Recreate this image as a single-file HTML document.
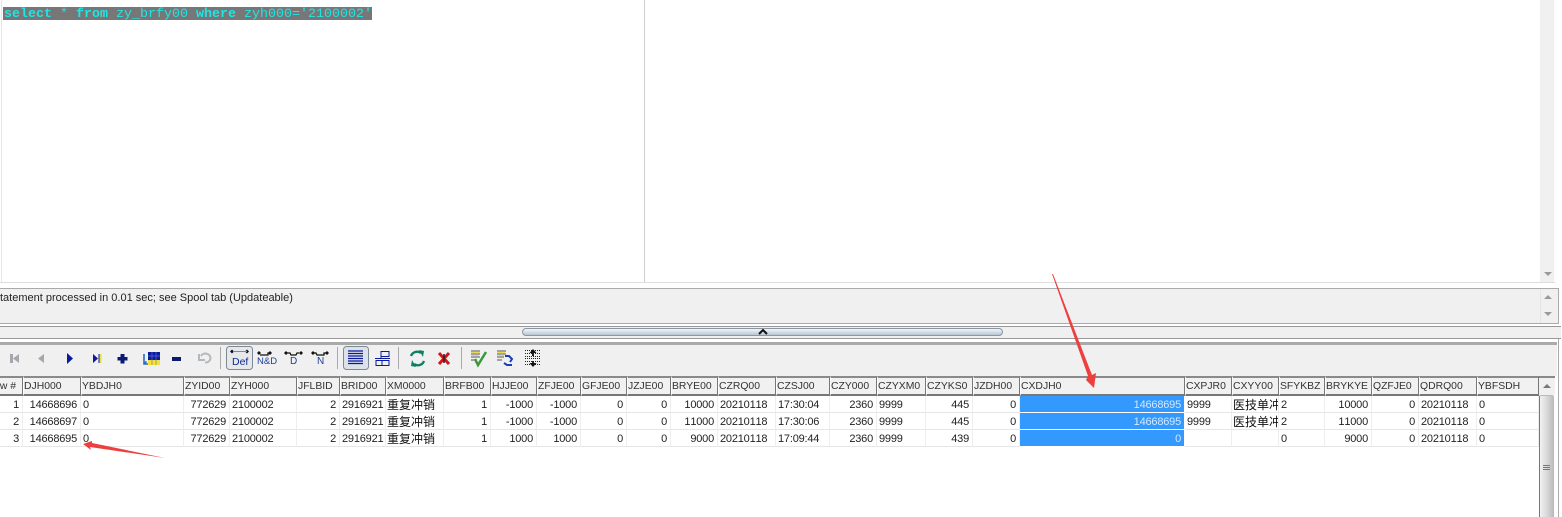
<!DOCTYPE html>
<html><head><meta charset="utf-8"><style>
html,body{margin:0;padding:0;background:#fff}
body{position:relative;width:1562px;height:517px;overflow:hidden;font-family:"Liberation Sans","Noto Sans CJK SC",sans-serif;font-size:11px;color:#222}
.a{position:absolute}
table{position:absolute;left:-19px;top:376px;border-collapse:separate;border-spacing:0;table-layout:fixed;width:1558px;background:#fff}
th,td{box-sizing:border-box;overflow:hidden;white-space:nowrap;font-weight:normal;text-align:left}
th{height:20px;background:#f1f1f1;border-top:2px solid #8a8a8a;border-bottom:2px solid #777;border-left:1px solid #fff;border-right:1px solid #777;font-size:10.4px;padding:1px 0 0 0;color:#333}
th:first-child{padding-right:6px}
td{height:17px;padding:2px 3px 0 2px;border-right:1px solid #eee;border-bottom:1px solid #e6e6e6;line-height:14px;font-size:11px;letter-spacing:-.2px;font-kerning:none}
.r{text-align:right}td.c{font-size:12px;padding-left:1px;letter-spacing:0;color:#111}
.b{background:#3399ff;color:#d4e8ff;border-bottom:1px solid #fff;border-right:1px solid #fff}
.ar{width:0;height:0;border-left:4px solid transparent;border-right:4px solid transparent}
</style></head><body>
<div class="a" style="left:1px;top:0;width:1px;height:282px;background:#e6e6e6"></div>
<div class="a" style="left:644px;top:0;width:1px;height:282px;background:#cfcfcf"></div>
<div class="a" style="left:3px;top:7px;width:369px;height:13px;background:#777"></div>
<div class="a" style="left:4px;top:8px;font:13.33px/14px 'Liberation Mono',monospace;color:#1fe6e6;white-space:pre"><b>select</b> * <b>from</b> zy_brfy00 <b>where</b> zyh000='2100002'</div>
<div class="a" style="left:1540px;top:0;width:14px;height:282px;background:#f0f0f0"></div>
<div class="a ar" style="left:1544px;top:272px;border-top:4px solid #999"></div>
<div class="a" style="left:0;top:282px;width:1555px;height:1px;background:#ddd"></div>

<div class="a" style="left:0;top:288px;width:1559px;height:36px;background:#f0f0f0;border-top:1px solid #aaa;border-right:1px solid #aaa;border-bottom:1px solid #aaa;box-sizing:border-box"></div>
<div class="a" style="left:1540px;top:289px;width:1px;height:34px;background:#e4e4e4"></div>
<div class="a" style="left:0;top:292px;font-size:11px;line-height:12px;white-space:pre;color:#222">tatement processed in 0.01 sec; see Spool tab (Updateable)</div>
<div class="a ar" style="left:1544px;top:295px;border-bottom:4px solid #999"></div>
<div class="a ar" style="left:1544px;top:312px;border-top:4px solid #999"></div>

<div class="a" style="left:0;top:326px;width:1561px;height:13px;background:#f0f0f0;border-top:1px solid #999;border-bottom:1px solid #999;box-sizing:border-box"></div>
<div class="a" style="left:522px;top:328px;width:481px;height:8px;box-sizing:border-box;border:1px solid #8a97a5;border-radius:4px;background:linear-gradient(#f2f5f8,#b8c6d2)"></div>
<svg class="a" style="left:758px;top:329px" width="10" height="6"><path d="M1 5L5 1L9 5" fill="none" stroke="#111" stroke-width="2"/></svg>

<div class="a" style="left:0;top:339px;width:1559px;height:178px;background:#fff;border-right:1px solid #aaa;box-sizing:border-box"></div>
<div class="a" style="left:0;top:342px;width:1557px;height:34px;background:#f0f0f0;border-top:3px solid #aaa;box-sizing:border-box"></div>

<svg class="a" style="left:0;top:345px" width="560" height="30" viewBox="0 345 560 30">
<g fill="#a4a8ac"><rect x="10" y="354" width="3" height="9"/><path d="M19 354v9l-6-4.500z"/><path d="M44 354v9l-6-4.500z"/></g>
<g fill="#0a1a9c"><path d="M67 353v11l6-5.500z"/><path d="M93 354v9l5-4.500z"/><rect x="98.500" y="354" width="1" height="9"/><path d="M120.500 354h4v3h3v3.500h-3v3h-4v-3h-3v-3.500h3z" fill="#0a1a70"/><rect x="172" y="357" width="9" height="4" fill="#0a1a70"/></g>
<rect x="99.500" y="354" width="2" height="9" fill="#e8e24a"/>
<rect x="148" y="352" width="12" height="8" fill="#0a1a9c"/><path d="M152 352v8M156 352v8M148 356h12" stroke="#5a6ad0" stroke-width=".7"/>
<rect x="148" y="360" width="12" height="5" fill="#f4e23c"/><path d="M152 360v5M156 360v5" stroke="#777" stroke-width=".6"/>
<path d="M144 354v10h4M146.500 361.500l-2.500 2.500" fill="none" stroke="#2a6cc0" stroke-width="1.600"/>
<path d="M199 354v6h6" fill="none" stroke="#b4b8bb" stroke-width="2"/><path d="M201 356a5 4.500 0 1 1 4 6.500" fill="none" stroke="#b4b8bb" stroke-width="2"/>
<rect x="220" y="347" width="1" height="22" fill="#aaa"/><rect x="337" y="347" width="1" height="22" fill="#aaa"/><rect x="398" y="347" width="1" height="22" fill="#aaa"/><rect x="461" y="347" width="1" height="22" fill="#aaa"/>
<rect x="226.500" y="346.500" width="26" height="23" rx="3" fill="#e6e8ec" stroke="#7c8a96"/>
<rect x="343.500" y="346.500" width="25" height="23" rx="3" fill="#dde2ea" stroke="#7c8a96"/>
<g fill="#111"><path d="M230 351.500l2-2 2 2-2 2z"/><path d="M245 351.500l2-2 2 2-2 2z"/><path d="M257 353l2-2 2 2-2 2z"/><path d="M268 353l2-2 2 2-2 2z"/><path d="M284 353l2-2 2 2-2 2zM299 353l2-2 2 2-2 2z"/><path d="M311 353l2-2 2 2-2 2zM325 353l2-2 2 2-2 2z"/></g>
<path d="M233 351.500h14" stroke="#888" fill="none"/>
<path d="M260 355h8v-2h2M287 353h3l1 2h5l1-2h2M314 353h2l1 2h7v-2h2" stroke="#111" fill="none" stroke-width="1.300"/>
<g fill="none" stroke="#0a1a9c"><path d="M348 351h15M348 353.500h15M348 356h15M348 358.500h15M348 361h15M348 363.500h15" stroke-width="1.300"/><path d="M375 358.500h15M381 351.500h8v5h-8zM376 360.500h6v5h-6zM382 360.500h7v5h-7zM381 354v4.500" stroke-width="1"/></g>
<path d="M411 356a6.500 6.500 0 0 1 10-3M424 361a6.500 6.500 0 0 1-10 3" fill="none" stroke="#0f7f62" stroke-width="2.400"/>
<path d="M419 350l5 1-1 6zM416 367l-5-1 1-6z" fill="#0f7f62"/>
<path d="M439 353l10 11M449 353l-10 11" stroke="#d0141a" stroke-width="3"/><path d="M444 354v9" stroke="#222" stroke-width="1.500"/>
<g fill="none" stroke-width="1.100"><path d="M471 351h9M471 354h9M471 357h9M471 360h6" stroke="#555"/><path d="M497 351h9M497 354h9M497 357h7M497 360h5" stroke="#555"/><path d="M471 352.500h9M471 355.500h8M497 352.500h8M497 355.500h7" stroke="#e8da55"/></g>
<path d="M475 359l3 6 8-13" fill="none" stroke="#3a9a3a" stroke-width="2.500"/>
<path d="M505 356h4l3 3-2 3M512 365h-5l-3-2" fill="none" stroke="#1a3fb0" stroke-width="2"/>
<g stroke="#222" fill="none"><path d="M525 350.500h16M525 353.500h16M525 356.500h16M525 358.500h16M525 361.500h16M525 364.500h16" stroke-dasharray="1 1"/><path d="M533 352v4M533 361v4" stroke-width="2"/></g>
<path d="M533 349l-3.500 4h7zM533 367l-3.500-4h7z" fill="#111"/>
</svg>
<div class="a" style="left:232px;top:357px;font-size:10.500px;line-height:11px;color:#0a2c8c">Def</div>
<div class="a" style="left:257px;top:357px;font-size:9.500px;line-height:10px;color:#1a3f99">N&amp;D</div>
<div class="a" style="left:290px;top:357px;font-size:10px;line-height:10px;color:#1a3f99">D</div>
<div class="a" style="left:317px;top:357px;font-size:10px;line-height:10px;color:#1a3f99">N</div>

<table>
<colgroup><col style="width:42px"><col style="width:58px"><col style="width:103px"><col style="width:46px"><col style="width:67px"><col style="width:43px"><col style="width:46px"><col style="width:58px"><col style="width:47px"><col style="width:46px"><col style="width:44px"><col style="width:46px"><col style="width:44px"><col style="width:47px"><col style="width:58px"><col style="width:54px"><col style="width:47px"><col style="width:49px"><col style="width:47px"><col style="width:47px"><col style="width:165px"><col style="width:47px"><col style="width:47px"><col style="width:46px"><col style="width:47px"><col style="width:47px"><col style="width:58px"><col style="width:62px"></colgroup>
<tr><th class="r">Row #</th><th>DJH000</th><th>YBDJH0</th><th>ZYID00</th><th>ZYH000</th><th>JFLBID</th><th>BRID00</th><th>XM0000</th><th>BRFB00</th><th>HJJE00</th><th>ZFJE00</th><th>GFJE00</th><th>JZJE00</th><th>BRYE00</th><th>CZRQ00</th><th>CZSJ00</th><th>CZY000</th><th>CZYXM0</th><th>CZYKS0</th><th>JZDH00</th><th>CXDJH0</th><th>CXPJR0</th><th>CXYY00</th><th>SFYKBZ</th><th>BRYKYE</th><th>QZFJE0</th><th>QDRQ00</th><th>YBFSDH</th></tr>
<tr><td class="r">1</td><td class="r">14668696</td><td>0</td><td class="r">772629</td><td>2100002</td><td class="r">2</td><td class="r">2916921</td><td class="c">重复冲销</td><td class="r">1</td><td class="r">-1000</td><td class="r">-1000</td><td class="r">0</td><td class="r">0</td><td class="r">10000</td><td>20210118</td><td>17:30:04</td><td class="r">2360</td><td>9999</td><td class="r">445</td><td class="r">0</td><td class="r b">14668695</td><td>9999</td><td class="c">医技单冲销</td><td>2</td><td class="r">10000</td><td class="r">0</td><td>20210118</td><td>0</td></tr>
<tr><td class="r">2</td><td class="r">14668697</td><td>0</td><td class="r">772629</td><td>2100002</td><td class="r">2</td><td class="r">2916921</td><td class="c">重复冲销</td><td class="r">1</td><td class="r">-1000</td><td class="r">-1000</td><td class="r">0</td><td class="r">0</td><td class="r">11000</td><td>20210118</td><td>17:30:06</td><td class="r">2360</td><td>9999</td><td class="r">445</td><td class="r">0</td><td class="r b">14668695</td><td>9999</td><td class="c">医技单冲销</td><td>2</td><td class="r">11000</td><td class="r">0</td><td>20210118</td><td>0</td></tr>
<tr><td class="r">3</td><td class="r">14668695</td><td>0</td><td class="r">772629</td><td>2100002</td><td class="r">2</td><td class="r">2916921</td><td class="c">重复冲销</td><td class="r">1</td><td class="r">1000</td><td class="r">1000</td><td class="r">0</td><td class="r">0</td><td class="r">9000</td><td>20210118</td><td>17:09:44</td><td class="r">2360</td><td>9999</td><td class="r">439</td><td class="r">0</td><td class="r b">0</td><td></td><td></td><td>0</td><td class="r">9000</td><td class="r">0</td><td>20210118</td><td>0</td></tr>
</table>

<div class="a" style="left:1539px;top:376px;width:16px;height:2px;background:#8a8a8a"></div>
<div class="a" style="left:1539px;top:378px;width:16px;height:17px;background:#f0f0f0"></div>
<div class="a ar" style="left:1543px;top:384px;border-bottom:4px solid #777"></div>
<div class="a" style="left:1539px;top:395px;width:15px;height:122px;box-sizing:border-box;border-left:1px solid #777;border-right:1px solid #bbb;border-top:1px solid #bbb;border-radius:2px 2px 0 0;background:linear-gradient(90deg,#f2f2f2,#d8d8d8 55%,#bdbdbd)"></div>
<div class="a" style="left:1543px;top:465px;width:7px;height:1px;background:#777;box-shadow:0 2px 0 #777,0 4px 0 #777"></div>

<svg class="a" style="left:0;top:0" width="1562" height="517">
<path d="M1052 274L1088 376L1086 380L1094 388L1096 373L1092 375L1053 274Z" fill="#ee3f3f"/>
<path d="M83 444L92 441L92 443L165 458L90 447L91 450Z" fill="#ee3f3f"/>
</svg>
</body></html>
